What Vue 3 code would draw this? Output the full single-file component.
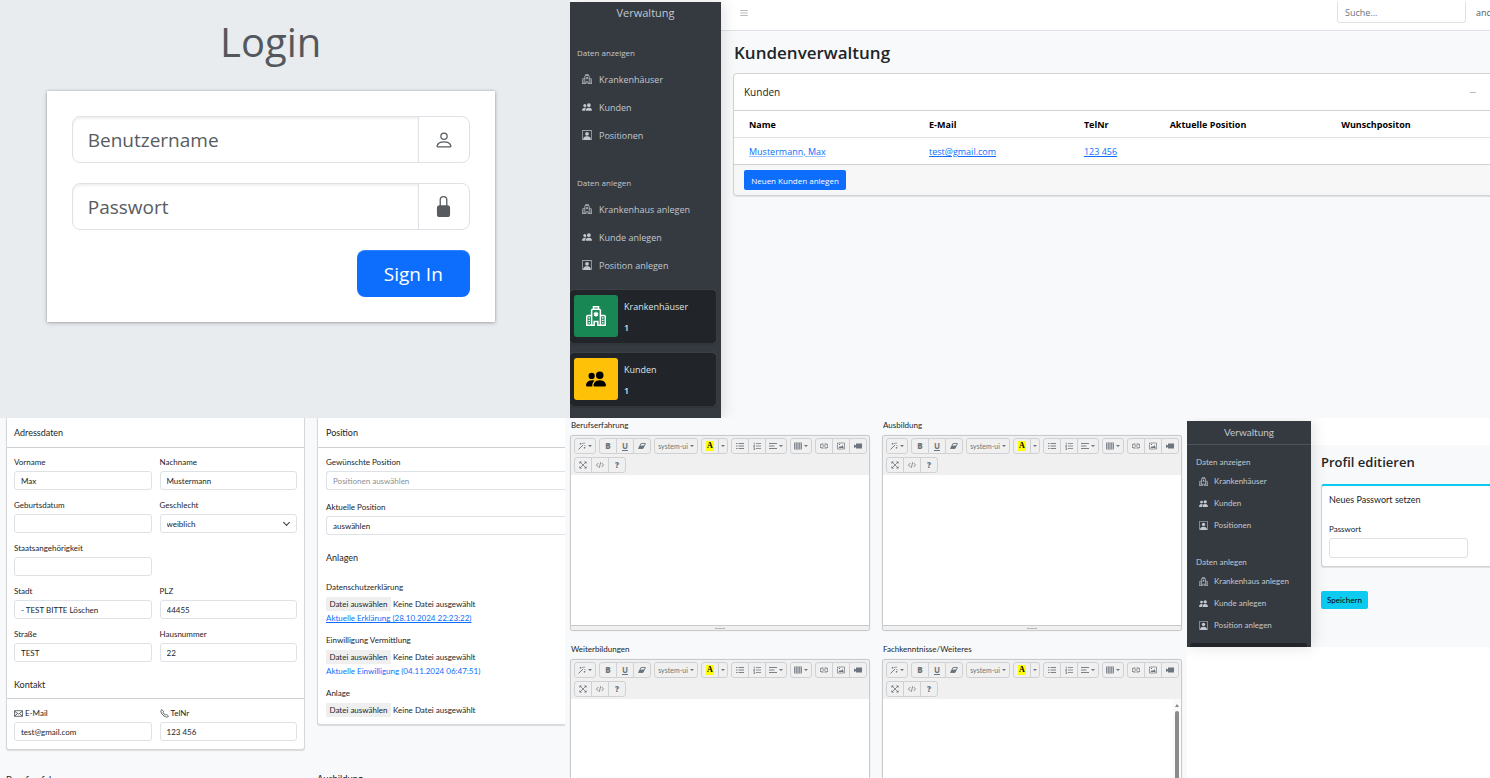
<script setup>
const navGroups = [
  {
    title: 'Daten anzeigen',
    items: [
      { icon: 'hospital', text: 'Krankenhäuser' },
      { icon: 'people', text: 'Kunden' },
      { icon: 'badge', text: 'Positionen' },
    ],
  },
  {
    title: 'Daten anlegen',
    items: [
      { icon: 'hospital', text: 'Krankenhaus anlegen' },
      { icon: 'people', text: 'Kunde anlegen' },
      { icon: 'badge', text: 'Position anlegen' },
    ],
  },
]

const stats = [
  { icon: 'hospital', text: 'Krankenhäuser', count: 1, tone: 'green' },
  { icon: 'people', text: 'Kunden', count: 1, tone: 'yellow' },
]

const address = [
  { id: 'vorname', label: 'Vorname', value: 'Max' },
  { id: 'nachname', label: 'Nachname', value: 'Mustermann' },
  { id: 'geburt', label: 'Geburtsdatum', value: '' },
  { id: 'geschlecht', label: 'Geschlecht', value: 'weiblich', select: true },
  { id: 'staat', label: 'Staatsangehörigkeit', value: '', alone: true },
  { id: 'stadt', label: 'Stadt', value: '- TEST BITTE Löschen' },
  { id: 'plz', label: 'PLZ', value: '44455' },
  { id: 'strasse', label: 'Straße', value: 'TEST' },
  { id: 'hausnummer', label: 'Hausnummer', value: '22' },
]

const contact = [
  { id: 'email', icon: 'mail', label: 'E-Mail', value: 'test@gmail.com' },
  { id: 'tel', icon: 'phone', label: 'TelNr', value: '123 456' },
]

const files = [
  { label: 'Datenschutzerklärung', link: 'Aktuelle Erklärung (28.10.2024 22:23:22)' },
  { label: 'Einwilligung Vermittlung', link: 'Aktuelle Einwilligung (04.11.2024 06:47:51)', plain: true },
  { label: 'Anlage' },
]

const editors = [
  { id: 'beruf', label: 'Berufserfahrung' },
  { id: 'ausbildung', label: 'Ausbildung' },
  { id: 'weiter', label: 'Weiterbildungen' },
  { id: 'fach', label: 'Fachkenntnisse/Weiteres', scroll: true },
]

const tools = [
  [{ icon: 'magic', caret: true }],
  [{ text: 'B', cls: 'bold' }, { text: 'U', cls: 'under' }, { icon: 'eraser' }],
  [{ text: 'system-ui', cls: 'font', caret: true }],
  [{ text: 'A', cls: 'mark' }, { cls: 'narrow', caret: true }],
  [{ icon: 'ul' }, { icon: 'ol' }, { icon: 'align', caret: true }],
  [{ icon: 'grid', caret: true }],
  [{ icon: 'link' }, { icon: 'image' }, { icon: 'video' }],
  [{ icon: 'expand' }, { icon: 'code' }, { text: '?', cls: 'bold' }],
]
</script>

<template>
  <svg class="sprite" aria-hidden="true">
    <symbol id="hospital" viewBox="0 0 16 16">
      <path d="M4.500 15.500V3.500a1 1 0 0 1 1-1h5a1 1 0 0 1 1 1v12M.6 15.500V8.500a1 1 0 0 1 1-1h3M11.500 7.500h3a1 1 0 0 1 .9 1v7M0 15.400h6.500v-3h3v3H16M6 2.500v-2h4v2" fill="none" stroke="currentColor" stroke-width="1.200" />
      <path d="M8 4.500v4M6.300 5.500l3.400 2M9.700 5.500l-3.400 2M2 9.500h1.200M2 11.500h1.200M2 13.500h1.200M12.800 9.500H14M12.800 11.500H14M12.800 13.500H14" fill="none" stroke="currentColor" />
    </symbol>
    <symbol id="people" viewBox="0 0 16 16">
      <path fill="currentColor" d="M7 14s-1 0-1-1 1-4 5-4 5 3 5 4-1 1-1 1zm4-6a3 3 0 1 0 0-6 3 3 0 0 0 0 6m-5.784 6A2.240 2.240 0 0 1 5 13c0-1.355.68-2.750 1.936-3.720A6.300 6.300 0 0 0 5 9c-4 0-5 3-5 4s1 1 1 1zM4.500 8a2.500 2.500 0 1 0 0-5 2.500 2.500 0 0 0 0 5" />
    </symbol>
    <symbol id="badge" viewBox="0 0 16 16">
      <path fill="currentColor" d="M11 6a3 3 0 1 1-6 0 3 3 0 0 1 6 0" />
      <path fill="currentColor" d="M2 0a2 2 0 0 0-2 2v12a2 2 0 0 0 2 2h12a2 2 0 0 0 2-2V2a2 2 0 0 0-2-2zm12 1a1 1 0 0 1 1 1v12a1 1 0 0 1-1 1v-1c0-1-1-4-6-4s-6 3-6 4v1a1 1 0 0 1-1-1V2a1 1 0 0 1 1-1z" />
    </symbol>
    <symbol id="person" viewBox="0 0 16 16">
      <path fill="currentColor" d="M8 8a3 3 0 1 0 0-6 3 3 0 0 0 0 6m2-3a2 2 0 1 1-4 0 2 2 0 0 1 4 0m4 8c0 1-1 1-1 1H3s-1 0-1-1 1-4 6-4 6 3 6 4m-1-.004c-.001-.246-.154-.986-.832-1.664C11.516 10.680 10.289 10 8 10s-3.516.680-4.168 1.332c-.678.678-.83 1.418-.832 1.664z" />
    </symbol>
    <symbol id="lock" viewBox="0 0 16 16">
      <path fill="currentColor" d="M8 1a2 2 0 0 1 2 2v4H6V3a2 2 0 0 1 2-2m3 6V3a3 3 0 0 0-6 0v4a2 2 0 0 0-2 2v5a2 2 0 0 0 2 2h6a2 2 0 0 0 2-2V9a2 2 0 0 0-2-2" />
    </symbol>
    <symbol id="menu" viewBox="0 0 16 16">
      <path d="M2 4h12M2 8h12M2 12h12" stroke="currentColor" />
    </symbol>
    <symbol id="mail" viewBox="0 0 16 16">
      <path d="M1 3h14v10H1zM1 4l7 5 7-5M1 12.500l5-4M15 12.500l-5-4" fill="none" stroke="currentColor" stroke-width="1.200" />
    </symbol>
    <symbol id="phone" viewBox="0 0 16 16">
      <path d="M3.500 1 1.500 2.800C1 8 8 15 13.200 14.500l1.800-2-3.500-2.800-2 .8C8 10 6 8 5.500 6.500l.8-2z" fill="none" stroke="currentColor" stroke-width="1.200" />
    </symbol>
    <symbol id="magic" viewBox="0 0 16 16">
      <path d="M1 15 10 6M12 1v3M8 2l1 2M15 8l-2-1M5 2v3M3.500 3.500h3M13 10v3M11.500 11.500h3" stroke="currentColor" stroke-width="1.800" fill="none" />
    </symbol>
    <symbol id="eraser" viewBox="0 0 16 16">
      <path d="M6 3h9l-5 10H1zM3.500 8h9" fill="none" stroke="currentColor" stroke-width="1.800" />
      <path d="M3.500 8h9L10 13H1z" fill="currentColor" />
    </symbol>
    <symbol id="ul" viewBox="0 0 16 16">
      <path d="M0 3h3M5 3h11M0 8h3M5 8h11M0 13h3M5 13h11" stroke="currentColor" stroke-width="1.800" />
    </symbol>
    <symbol id="ol" viewBox="0 0 16 16">
      <path d="M6 3h10M6 8h10M6 13h10M2.500 1v4M1 7h2.500L1 10h3M1 12h2.500v3H1" stroke="currentColor" stroke-width="1.500" fill="none" />
    </symbol>
    <symbol id="align" viewBox="0 0 16 16">
      <path d="M0 3h16M0 8h11M0 13h16" stroke="currentColor" stroke-width="1.800" />
    </symbol>
    <symbol id="grid" viewBox="0 0 16 16">
      <path d="M1 2h14v12H1zM1 6h14M1 10h14M5.500 2v12M10.500 2v12" fill="none" stroke="currentColor" stroke-width="1.600" />
    </symbol>
    <symbol id="link" viewBox="0 0 16 16">
      <path d="M7 4H4a4 4 0 0 0 0 8h3M9 4h3a4 4 0 0 1 0 8H9M5 8h6" fill="none" stroke="currentColor" stroke-width="2" />
    </symbol>
    <symbol id="image" viewBox="0 0 16 16">
      <path d="M1 2h14v12H1z" fill="none" stroke="currentColor" stroke-width="1.400" />
      <path d="M3 12l3-4 2 2 3-4 2.500 6zM4 4h2v2H4z" fill="currentColor" />
    </symbol>
    <symbol id="video" viewBox="0 0 16 16">
      <path d="M4 3h12v10H4zM0 5l4 2v3l-4 2z" fill="currentColor" />
    </symbol>
    <symbol id="expand" viewBox="0 0 16 16">
      <path d="M2 2l12 12M14 2 2 14" stroke="currentColor" stroke-width="1.600" />
      <path d="M1 1h5L1 6zM15 1v5l-5-5zM1 15v-5l5 5zM15 15h-5l5-5z" fill="currentColor" />
    </symbol>
    <symbol id="code" viewBox="0 0 16 16">
      <path d="M4.500 4 1 8l3.500 4M11.500 4 15 8l-3.500 4M9.500 2l-3 12" fill="none" stroke="currentColor" stroke-width="1.500" />
    </symbol>
  </svg>

  <main class="board">
    <div class="row upper">
      <section class="login">
        <form class="login-inner" @submit.prevent>
          <h1>Login</h1>
          <div class="login-card">
            <div class="group">
              <input type="text" placeholder="Benutzername" aria-label="Benutzername" />
              <span class="addon"><svg><use href="#person" /></svg></span>
            </div>
            <div class="group">
              <input type="password" placeholder="Passwort" aria-label="Passwort" />
              <span class="addon"><svg class="tall"><use href="#lock" /></svg></span>
            </div>
            <button class="signin">Sign In</button>
          </div>
        </form>
      </section>

      <section class="admin">
        <aside class="side">
          <div class="brand">Verwaltung</div>
          <nav v-for="g in navGroups" :key="g.title">
            <h2>{{ g.title }}</h2>
            <a v-for="i in g.items" :key="i.text" href="#"><svg><use :href="'#' + i.icon" /></svg>{{ i.text }}</a>
          </nav>
          <div class="stats">
            <div v-for="s in stats" :key="s.text" class="stat">
              <span class="tile" :class="s.tone"><svg><use :href="'#' + s.icon" /></svg></span>
              <div><p>{{ s.text }}</p><strong>{{ s.count }}</strong></div>
            </div>
          </div>
        </aside>
        <div class="admin-main">
          <header class="topbar">
            <button class="burger" aria-label="Menü"><svg><use href="#menu" /></svg></button>
            <input type="search" placeholder="Suche..." aria-label="Suche" />
            <a href="#">and</a>
          </header>
          <div class="admin-body">
            <h1>Kundenverwaltung</h1>
            <div class="card">
              <div class="card-head"><h2>Kunden</h2><button aria-label="Einklappen"></button></div>
              <table>
                <thead>
                  <tr><th>Name</th><th>E-Mail</th><th>TelNr</th><th>Aktuelle Position</th><th>Wunschpositon</th></tr>
                </thead>
                <tbody>
                  <tr>
                    <td><a class="pale" href="#">Mustermann, Max</a></td>
                    <td><a href="#">test@gmail.com</a></td>
                    <td><a href="#">123 456</a></td>
                    <td></td>
                    <td></td>
                  </tr>
                </tbody>
              </table>
              <div class="card-foot"><button>Neuen Kunden anlegen</button></div>
            </div>
          </div>
        </div>
      </section>
    </div>

    <div class="row lower">
      <section class="forms">
        <div class="form-col">
          <div class="panel">
            <h2>Adressdaten</h2>
            <div class="fields">
              <div v-for="f in address" :key="f.id" class="field" :class="{ alone: f.alone }">
                <label :for="f.id">{{ f.label }}</label>
                <span v-if="f.select" class="select">
                  <select :id="f.id"><option>{{ f.value }}</option></select>
                </span>
                <input v-else :id="f.id" type="text" :value="f.value" />
              </div>
            </div>
            <h2 class="second">Kontakt</h2>
            <div class="fields">
              <div v-for="f in contact" :key="f.id" class="field">
                <label :for="f.id"><svg><use :href="'#' + f.icon" /></svg>{{ f.label }}</label>
                <input :id="f.id" type="text" :value="f.value" />
              </div>
            </div>
          </div>
          <h3>Berufserfahrung</h3>
        </div>
        <div class="form-col">
          <div class="panel wide">
            <h2>Position</h2>
            <div class="stack">
              <div class="field">
                <label for="wunsch">Gewünschte Position</label>
                <input id="wunsch" type="text" placeholder="Positionen auswählen" />
              </div>
              <div class="field">
                <label for="aktuell">Aktuelle Position</label>
                <select id="aktuell"><option>auswählen</option></select>
              </div>
              <h4>Anlagen</h4>
              <div v-for="f in files" :key="f.label" class="upload">
                <div class="caption">{{ f.label }}</div>
                <label class="file">
                  <input type="file" :aria-label="f.label" />
                  <span class="pick">Datei auswählen</span>
                  <span>Keine Datei ausgewählt</span>
                </label>
                <a v-if="f.link" href="#" :class="{ plain: f.plain }">{{ f.link }}</a>
              </div>
            </div>
          </div>
          <h3>Ausbildung</h3>
        </div>
      </section>

      <section class="editors">
        <div v-for="e in editors" :key="e.id" class="editor-item">
          <label :for="e.id">{{ e.label }}</label>
          <div class="editor">
            <div class="toolbar">
              <div v-for="(group, gi) in tools" :key="gi" class="btns">
                <button v-for="(t, ti) in group" :key="ti" type="button" :class="[t.cls, { drop: t.caret }]">
                  <svg v-if="t.icon"><use :href="'#' + t.icon" /></svg>
                  <span v-if="t.text">{{ t.text }}</span>
                  <i v-if="t.caret"></i>
                </button>
              </div>
            </div>
            <div class="paper">
              <textarea :id="e.id"></textarea>
              <div v-if="e.scroll" class="scroller"><i></i><b></b></div>
            </div>
            <div class="grip"><i></i></div>
          </div>
        </div>
      </section>

      <section class="profile">
        <div class="profile-inner">
          <aside class="side mini">
            <div class="brand">Verwaltung</div>
            <nav v-for="g in navGroups" :key="g.title">
              <h2>{{ g.title }}</h2>
              <a v-for="i in g.items" :key="i.text" href="#"><svg><use :href="'#' + i.icon" /></svg>{{ i.text }}</a>
            </nav>
            <div class="stub"></div>
          </aside>
          <div class="profile-main">
            <div class="profile-bar"></div>
            <div class="profile-body">
              <h1>Profil editieren</h1>
              <div class="pw-card">
                <h2>Neues Passwort setzen</h2>
                <label for="pw">Passwort</label>
                <input id="pw" type="password" />
              </div>
              <button>Speichern</button>
            </div>
          </div>
        </div>
      </section>
    </div>
  </main>
</template>

<style>
body {
  margin: 0;
  background: #fff;
}
</style>

<style scoped>
* {
  box-sizing: border-box;
}
h1, h2, h3, h4, p {
  margin: 0;
  font-weight: 400;
}
input, select, button, textarea {
  font: inherit;
  color: inherit;
  margin: 0;
  padding: 0;
  border: 0;
  border-radius: 0;
  background: none;
  appearance: none;
  outline: 0;
  min-width: 0;
}
svg {
  display: block;
  flex: none;
}
a {
  color: #0d6efd;
}
.sprite {
  position: absolute;
  width: 0;
  height: 0;
}
.board {
  display: grid;
  grid-template-rows: 418fr 360fr;
  height: 100vh;
  overflow: hidden;
  font-family: "Open Sans", "Noto Sans", sans-serif;
  font-size: 9px;
  color: #212529;
}
.row {
  display: grid;
  min-height: 0;
}
.row > section {
  min-width: 0;
  min-height: 0;
  overflow: hidden;
}
.upper {
  grid-template-columns: 570fr 920fr;
}
.lower {
  grid-template-columns: 565fr 622fr 303fr;
}

/* Login */
.login {
  background: #e9ecef;
}
.login-inner {
  padding: 12px 13.2% 0 8.2%;
}
.login h1 {
  height: 79px;
  font-size: 40px;
  line-height: 60px;
  text-align: center;
  color: #53585d;
}
.login-card {
  display: flex;
  flex-direction: column;
  gap: 20px;
  padding: 25px;
  background: #fff;
  box-shadow: 0 0 2px rgba(0, 0, 0, 0.2), 0 1px 4px rgba(0, 0, 0, 0.25);
}
.group {
  display: flex;
  height: 47px;
  border: 1px solid #dee2e6;
  border-radius: 8px;
  font-size: 19px;
  color: #585c60;
}
.group input {
  flex: 1;
  padding: 0 15px;
  border-right: 1px solid #dee2e6;
  border-radius: 8px 0 0 8px;
  box-shadow: inset 0 2px 2px rgba(0, 0, 0, 0.06);
}
.group input::placeholder {
  color: #585c60;
}
.addon {
  display: flex;
  align-items: center;
  justify-content: center;
  width: 50px;
}
.addon svg {
  width: 20px;
  height: 20px;
}
.addon .tall {
  width: 21px;
  height: 21px;
}
.signin {
  align-self: flex-end;
  width: 113px;
  height: 47px;
  border-radius: 8px;
  background: #0d6efd;
  box-shadow: inset 0 1px 0 rgba(255, 255, 255, 0.15);
  font-size: 19px;
  color: #fff;
}

/* Sidebar */
.admin {
  display: flex;
  padding-top: 2px;
}
.side {
  flex: none;
  width: 151px;
  background: #343a40;
  color: #c2c7d0;
  box-shadow: 2px 0 14px rgba(0, 0, 0, 0.12);
  z-index: 1;
}
.brand {
  height: 22px;
  line-height: 22px;
  font-size: 11px;
  text-align: center;
}
.side nav {
  padding-top: 22px;
}
.side nav + nav {
  padding-top: 27px;
}
.side h2 {
  padding: 0 0 5px 7px;
  font-size: 8px;
  line-height: 14px;
}
.side nav a {
  display: flex;
  align-items: center;
  gap: 7px;
  height: 28px;
  padding-left: 12px;
  font-size: 9px;
  color: inherit;
  text-decoration: none;
}
.side nav svg {
  width: 10px;
  height: 10px;
}
.stats {
  display: grid;
  gap: 10px;
  padding: 11px 5px 0 0;
}
.stat {
  display: flex;
  gap: 6px;
  height: 53px;
  padding: 5px 4px;
  border-radius: 3px;
  background: #212529;
  box-shadow: 0 0 1px #8a8f94, 0 1px 2px rgba(0, 0, 0, 0.3);
  color: #dee2e6;
}
.stat p,
.stat strong {
  display: block;
  line-height: 21px;
}
.stat p {
  margin-top: 1px;
}
.stat strong {
  font-weight: 600;
}
.tile {
  display: flex;
  align-items: center;
  justify-content: center;
  width: 44px;
  height: 42px;
  border-radius: 3px;
}
.tile svg {
  width: 20px;
  height: 20px;
}
.green {
  background: #198754;
  color: #fff;
}
.yellow {
  background: #ffc107;
  color: #000;
}

/* Customer page */
.admin-main {
  display: flex;
  flex: 1;
  flex-direction: column;
  min-width: 0;
  background: #f8f9fa;
}
.topbar {
  display: flex;
  flex: none;
  align-items: center;
  height: 29px;
  padding: 0 0 7px 18px;
  border-bottom: 1px solid #dee2e6;
  background: #fff;
  white-space: nowrap;
}
.burger {
  margin-right: auto;
  color: #8a8d90;
}
.burger svg {
  width: 10px;
  height: 10px;
}
.topbar input {
  width: 129px;
  height: 21px;
  margin-right: 10px;
  padding: 0 7px;
  border: solid #dee2e6;
  border-width: 0 1px 1px;
  border-radius: 0 0 3px 3px;
}
.topbar input::placeholder {
  color: #6c757d;
}
.topbar a {
  width: 14px;
  color: #555a5f;
  text-decoration: none;
}
.admin-body {
  padding: 10px 0 0 12px;
}
.admin-body h1 {
  padding-left: 1px;
  font-size: 17px;
  line-height: 24px;
  font-weight: 600;
}
.card {
  margin: 8px -4px 0 0;
  border: 1px solid #d0d2d4;
  border-radius: 4px;
  background: #fff;
  box-shadow: 0 1px 1px rgba(0, 0, 0, 0.1);
}
.card-head {
  display: flex;
  align-items: center;
  justify-content: space-between;
  height: 37px;
  padding: 0 17px 0 10px;
  border-bottom: 1px solid #d0d2d4;
}
.card-head h2 {
  font-size: 10px;
}
.card-head button {
  width: 6px;
  height: 1px;
  background: #bbb;
}
table {
  width: 100%;
  table-layout: fixed;
  border-collapse: separate;
  border-spacing: 0;
}
th, td {
  height: 27px;
  padding: 0;
  border-bottom: 1px solid #dee2e6;
  text-align: left;
}
td {
  border-color: #d0d2d4;
}
th {
  font-weight: 700;
  color: #000;
}
th:first-child,
td:first-child {
  width: 25.7%;
  padding-left: 15px;
}
th:nth-child(2) {
  width: 20.4%;
}
th:nth-child(3) {
  width: 11.3%;
}
th:nth-child(4) {
  width: 22.6%;
}
.pale {
  text-decoration-color: #9ec5fe;
}
.card-foot {
  padding: 5px 10px;
  border-radius: 0 0 4px 4px;
  background: #f7f7f7;
}
.card-foot button {
  display: block;
  width: 102px;
  height: 20px;
  border-radius: 2px;
  background: #0d6efd;
  font-size: 8px;
  color: #fff;
}

/* Address and position forms */
.forms {
  display: grid;
  grid-template-columns: 299fr 248fr;
  gap: 12px;
  padding-left: 6px;
  background: #f8f9fa;
  font-family: Lato, "Open Sans", sans-serif;
  font-size: 8px;
  line-height: 12px;
}
.form-col {
  min-width: 0;
}
.panel {
  border: 1px solid #d6d8da;
  border-top: 0;
  border-radius: 0 0 3px 3px;
  background: #fff;
  box-shadow: 0 1px 1px rgba(0, 0, 0, 0.12);
}
.wide {
  border-right: 0;
  border-bottom-right-radius: 0;
}
.panel h2 {
  height: 30px;
  padding: 0 7px;
  border-bottom: 1px solid #ced0d2;
  font-size: 9px;
  line-height: 30px;
}
.panel .second {
  height: 29px;
}
.fields {
  display: grid;
  grid-template-columns: 1fr 1fr;
  gap: 9px 8px;
  padding: 8px 7px;
}
.alone {
  margin-right: calc(50% + 4px);
  grid-column: 1 / 3;
}
.field label {
  display: flex;
  align-items: center;
  gap: 2px;
  height: 12px;
  margin-bottom: 3px;
}
.field label svg {
  width: 9px;
  height: 9px;
}
.field input,
.field select {
  display: block;
  width: 100%;
  height: 19px;
  padding: 0 6px;
  border: 1px solid #dee2e6;
  border-radius: 3px;
}
.field input::placeholder {
  color: #8a8f94;
}
.select {
  position: relative;
  display: block;
}
.select::after {
  content: "";
  position: absolute;
  top: 6px;
  right: 8px;
  width: 4px;
  height: 4px;
  border: solid #343a40;
  border-width: 0 1px 1px 0;
  transform: rotate(45deg);
  pointer-events: none;
}
.wide h2 {
  padding-left: 8px;
}
.stack {
  padding: 8px 0 7px 8px;
}
.stack .field {
  margin-bottom: 11px;
}
.stack .field input,
.stack .field select {
  border-right: 0;
  border-radius: 3px 0 0 3px;
}
h4 {
  margin: 17px 0;
  font-size: 9px;
  line-height: 12px;
}
.upload + .upload {
  margin-top: 10px;
}
.upload {
  white-space: nowrap;
}
.file {
  display: flex;
  align-items: center;
  gap: 2px;
  height: 15px;
  margin-top: 3px;
  font-size: 8px;
}
.file input {
  position: absolute;
  width: 1px;
  height: 1px;
  opacity: 0;
}
.pick {
  width: 65px;
  line-height: 14px;
  background: #efefef;
  text-align: center;
}
.upload a {
  display: block;
  margin-top: 1px;
}
.plain {
  text-decoration: none;
}
.form-col h3 {
  margin-top: 24px;
}
.form-col:last-child h3 {
  margin-top: 48px;
}

/* Rich text editors */
.editors {
  display: grid;
  grid-template-columns: 1fr 1fr;
  align-content: start;
  gap: 12px;
  padding: 1px 5px 0 5px;
  background: #f8f9fa;
}
.editor-item {
  min-width: 0;
}
.editor-item > label {
  display: block;
  height: 16px;
  padding-left: 1px;
  font-family: Lato, "Open Sans", sans-serif;
  font-size: 8px;
  line-height: 13px;
}
.editor {
  overflow: hidden;
  border: 1px solid #c8cacc;
  border-radius: 3px;
  background: #fff;
  box-shadow: 0 0 1px rgba(0, 0, 0, 0.2);
}
.toolbar {
  display: flex;
  flex-wrap: wrap;
  gap: 3px;
  padding: 2px 0 2px 3px;
  background: #f0f0f0;
}
.btns {
  display: flex;
}
.btns button {
  display: flex;
  align-items: center;
  justify-content: center;
  gap: 2px;
  width: 18px;
  height: 16px;
  margin-left: -1px;
  border: 1px solid #cfd1d3;
  font-size: 8px;
  line-height: 10px;
  color: #6c757d;
}
.btns button:first-child {
  margin-left: 0;
  border-radius: 3px 0 0 3px;
}
.btns button:last-child {
  border-radius: 0 3px 3px 0;
}
.btns button:only-child {
  border-radius: 3px;
}
.btns svg {
  width: 8px;
  height: 8px;
}
.btns .drop {
  width: 22px;
}
.btns .bold {
  font-weight: 800;
}
.btns .under {
  font-weight: 700;
  text-decoration: underline;
}
.btns .font {
  width: 44px;
  font-family: Lato, sans-serif;
  font-size: 7px;
}
.btns .narrow {
  width: 10px;
}
.btns .mark {
  font-family: "Liberation Serif", serif;
  font-weight: 700;
  color: #000;
}
.mark span {
  padding: 0 1px;
  background: #ff0;
}
.btns i {
  border: solid transparent;
  border-width: 2px 2px 0;
  border-top-color: #6c757d;
}
.paper {
  display: flex;
  height: 150px;
}
textarea {
  flex: 1;
  resize: none;
}
.scroller {
  display: flex;
  flex-direction: column;
  align-items: center;
  gap: 4px;
  width: 8px;
  padding-top: 5px;
  background: #fafafa;
}
.scroller i {
  border: solid transparent;
  border-width: 0 2px 3px;
  border-bottom-color: #858585;
}
.scroller b {
  flex: 1;
  width: 4px;
  border-radius: 2px 2px 0 0;
  background: #8b8b8b;
}
.grip {
  display: flex;
  align-items: center;
  justify-content: center;
  height: 5px;
  border-top: 1px solid #c8cacc;
  background: #f0f0f0;
}
.grip i {
  width: 10px;
  height: 1px;
  background: #b5b5b5;
}

/* Profile */
.profile {
  padding-top: 3px;
}
.profile-inner {
  display: flex;
}
.mini {
  width: 124px;
  font-family: Lato, "Open Sans", sans-serif;
}
.mini .brand {
  height: 24px;
  border-bottom: 1px solid #4b545c;
  font-size: 10px;
}
.mini nav {
  padding-top: 11px;
}
.mini nav + nav {
  padding-top: 20px;
}
.mini h2 {
  padding: 0 0 2px 9px;
  line-height: 12px;
}
.mini nav a {
  gap: 6px;
  height: 22px;
  padding-left: 12px;
  font-size: 8px;
}
.mini nav svg {
  width: 9px;
  height: 9px;
}
.stub {
  height: 4px;
  margin: 7px 4px 0 3px;
  border-radius: 3px 3px 0 0;
  background: #212529;
}
.profile-main {
  flex: 1;
  min-width: 0;
  background: #f8f9fa;
}
.profile-bar {
  height: 24px;
  background: #fff;
}
.profile-body {
  padding: 7px 0 0 10px;
}
.profile-body h1 {
  font-size: 13px;
  line-height: 20px;
  font-weight: 600;
}
.pw-card {
  margin: 12px -4px 24px 0;
  padding: 8px 7px;
  border: 1px solid #d0d2d4;
  border-top: 2px solid #0dcaf0;
  border-radius: 3px;
  background: #fff;
  box-shadow: 0 1px 1px rgba(0, 0, 0, 0.1);
  font-family: Lato, "Open Sans", sans-serif;
  font-size: 8px;
  line-height: 12px;
}
.pw-card h2 {
  margin-bottom: 17px;
  font-size: 9px;
}
.pw-card label {
  display: block;
}
.pw-card input {
  display: block;
  width: 139px;
  height: 20px;
  margin-top: 3px;
  border: 1px solid #dee2e6;
  border-radius: 3px;
}
.profile-body button {
  width: 47px;
  height: 18px;
  border-radius: 2px;
  background: #0dcaf0;
  font-family: Lato, "Open Sans", sans-serif;
  font-size: 8px;
  color: #000;
}
</style>
